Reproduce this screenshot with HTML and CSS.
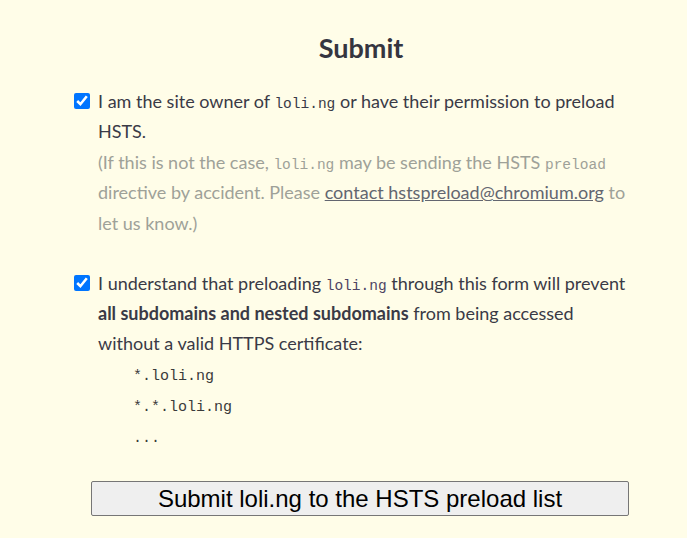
FILE: index.html
```html
<!DOCTYPE html>
<html>
<head>
<meta charset="utf-8">
<link rel="stylesheet" href="styles.css">
</head>
<body>
<main class="form">
  <h2 class="title">Submit</h2>
  <input class="check" type="checkbox" checked>
  <div class="text">
    I am the site owner of <code>loli.ng</code> or have their permission to preload HSTS.<br>
    <span class="note">(If this is not the case, <code>loli.ng</code> may be sending the HSTS <code>preload</code> directive by accident. Please <a class="link" href="#">contact hstspreload@chromium.org</a> to let us know.)</span>
  </div>
  <input class="check check-2" type="checkbox" checked>
  <div class="text text-2">
    I understand that preloading <code class="purple">loli.ng</code> through this form will prevent <b>all subdomains and nested subdomains</b> from being accessed without a valid HTTPS certificate:
    <div class="codes">
      <code>*.loli.ng</code>
      <code>*.*.loli.ng</code>
      <code>...</code>
    </div>
  </div>
  <button class="submit" type="button">Submit loli.ng to the HSTS preload list</button>
</main>
</body>
</html>
```

FILE: styles.css
```css
html, body {
  margin: 0;
  background: #fffde8;
}
body {
  font-family: Lato, "Open Sans", sans-serif;
  font-size: 18px;
  line-height: 30.4px;
  color: #3a3a46;
}
.form {
  display: grid;
  grid-template-columns: 24px 532px;
  padding: 0 0 0 74px;
}
.title {
  grid-column: 2;
  margin: 30px 0 20px;
  padding-right: 6px;
  text-align: center;
  font-size: 27px;
  line-height: 36px;
  font-weight: 700;
  color: #353540;
}
.check {
  grid-column: 1;
  width: 16px;
  height: 16px;
  margin: 7px 0 0 0;
  accent-color: #0075ff;
}
.text {
  grid-column: 2;
}
.text-2 {
  margin-top: 29.5px;
}
.check-2 {
  margin-top: 36.5px;
}
code {
  font-family: "Liberation Mono", "DejaVu Sans Mono", monospace;
  font-size: 14.5px;
  line-height: 1;
}
.purple {
  color: #4e4463;
}
.note {
  color: #9ea198;
}
.link {
  color: #636670;
  text-decoration: underline;
}
.codes {
  display: flex;
  flex-direction: column;
  padding-left: 35px;
  margin-top: 2.5px;
}
.codes code {
  font-size: 15px;
  line-height: 31px;
  color: #3a3a3a;
}
.submit {
  grid-column: 2;
  margin: 27px 0 0 -7px;
  width: 538px;
  height: 35px;
  padding: 0;
  background: #efefef;
  border: 1px solid #767676;
  border-radius: 2px;
  font-family: "Liberation Sans", Arial, sans-serif;
  font-size: 24px;
  color: #000;
}
```
